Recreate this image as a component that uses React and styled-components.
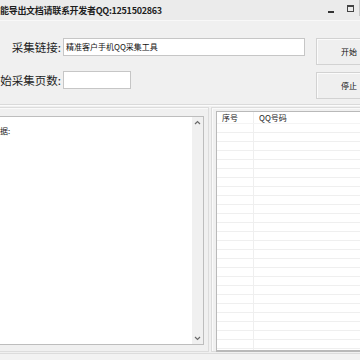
import React from "react";
import styled, { createGlobalStyle } from "styled-components";

const Global = createGlobalStyle`
  html, body { margin: 0; padding: 0; background: #f0f0f0; }
  body { font-family: "Noto Sans CJK SC", "Liberation Sans", sans-serif; }
`;

const Window = styled.div`
  width: 360px;
  height: 360px;
  overflow: hidden;
  background: #f0f0f0;
  display: flex;
  flex-direction: column;
  color: #1e1e1e;
`;

const TitleBar = styled.div`
  flex: none;
  height: 20px;
  display: flex;
  align-items: center;
  background: #ebebeb;
  border-bottom: 1px solid #f8f8f8;
`;

const Title = styled.div`
  flex: 1;
  font-size: 9px;
  font-weight: 700;
  white-space: nowrap;
  letter-spacing: -0.3px;
`;

const Controls = styled.div`
  display: flex;
  align-items: center;
  height: 100%;
`;

const MinBtn = styled.span`
  width: 6px;
  height: 2px;
  background: #333;
  margin: 4px 13px 0 0;
`;

const MaxBtn = styled.span`
  width: 5px;
  height: 4px;
  border: 1px solid #444;
  border-top-width: 2px;
  margin: -4px 5px 0 0;
`;

const EdgeLine = styled.span`
  width: 1px;
  height: 16px;
  align-self: flex-start;
  background: #c8c8c8;
`;

const FormArea = styled.div`
  flex: none;
  display: flex;
  padding: 17px 0 5px 0;
`;

const Fields = styled.div`
  width: 305px;
  display: flex;
  flex-direction: column;
  gap: 15px;
`;

const Row = styled.div`
  display: flex;
  align-items: center;
  height: 18px;
`;

const Label = styled.div`
  width: 61px;
  margin-right: 2px;
  flex: none;
  display: flex;
  justify-content: flex-end;
  white-space: nowrap;
  font-size: 11.5px;
  color: #222;
  line-height: 18px;
`;

const Input = styled.div`
  box-sizing: border-box;
  height: 18px;
  width: ${(p) => p.$w}px;
  background: #fff;
  border: 1px solid #c6c6c6;
  font-size: 8px;
  line-height: 16px;
  padding-left: 2px;
  white-space: nowrap;
  color: #111;
`;

const Buttons = styled.div`
  flex: none;
  margin-left: 11px;
  display: flex;
  flex-direction: column;
  gap: 7px;
`;

const Button = styled.div`
  box-sizing: border-box;
  width: 66px;
  height: 27px;
  border: 1px solid #d2d2d2;
  background: #efefef;
  box-shadow: inset 1px 1px 0 #fbfbfb;
  display: flex;
  align-items: center;
  justify-content: center;
  font-size: 8px;
  color: #111;
`;

const Separator = styled.div`
  flex: none;
  height: 0;
  border-top: 1px solid #dadada;
  border-bottom: 1px solid #fbfbfb;
`;

const Panels = styled.div`
  flex: none;
  height: 245px;
  margin-top: 1px;
  display: flex;
  gap: 2px;
`;

const GroupBox = styled.div`
  box-sizing: border-box;
  flex: none;
  width: ${(p) => p.$w}px;
  margin-left: ${(p) => p.$ml || 0}px;
  border: 1px solid #dcdcdc;
  box-shadow: inset 1px 1px 0 #fafafa;
  padding: ${(p) => p.$pad};
  display: flex;
`;

const TextArea = styled.div`
  box-sizing: border-box;
  flex: 1;
  height: 229px;
  background: #fff;
  border: 1px solid #bdbdbd;
  display: flex;
`;

const LogText = styled.div`
  flex: 1;
  font-size: 8px;
  padding: 8px 0 0 0;
  white-space: nowrap;
  color: #222;
`;

const Scrollbar = styled.div`
  width: 11px;
  background: #f0f0f0;
  display: flex;
  flex-direction: column;
  justify-content: space-between;
  align-items: center;
  padding: 3px 0 3px;
`;

const ListView = styled.div`
  box-sizing: border-box;
  width: 160px;
  height: 241px;
  background: #fff;
  border: 1px solid #b9b9b9;
  border-bottom-width: 2px;
  display: flex;
  flex-direction: column;
  overflow: hidden;
`;

const ListRow = styled.div`
  flex: none;
  display: flex;
  height: ${(p) => (p.$head ? 12 : 9)}px;
  box-sizing: border-box;
  border-bottom: 1px solid ${(p) => (p.$head ? "#f4f4f4" : "#efefef")};
  font-size: 8px;
  line-height: 11px;
  color: #222;
`;

const Cell = styled.div`
  box-sizing: border-box;
  width: ${(p) => p.$w || "auto"};
  flex: ${(p) => (p.$w ? "none" : 1)};
  padding-left: 5px;
  border-right: ${(p) => (p.$w ? "1px solid #efefef" : "none")};
  white-space: nowrap;
`;

const Footer = styled.div`
  flex: 1;
  margin-top: 1px;
  border-top: 1px solid #dcdcdc;
  background: #f2f2f2;
`;

const Chevron = ({ up }) => (
  <svg width="7" height="5" viewBox="0 0 7 5">
    <path
      d={up ? "M1 4 L3.5 1.5 L6 4" : "M1 1 L3.5 3.5 L6 1"}
      fill="none"
      stroke="#6a6a6a"
      strokeWidth="1.2"
    />
  </svg>
);

export default function App() {
  const rows = Array.from({ length: 26 });
  return (
    <Window>
      <Global />
      <TitleBar>
        <Title>能导出文档请联系开发者QQ:1251502863</Title>
        <Controls>
          <MinBtn />
          <MaxBtn />
          <EdgeLine />
        </Controls>
      </TitleBar>

      <FormArea>
        <Fields>
          <Row>
            <Label>采集链接:</Label>
            <Input $w={242}>精准客户手机QQ采集工具</Input>
          </Row>
          <Row>
            <Label>开始采集页数:</Label>
            <Input $w={68} />
          </Row>
        </Fields>
        <Buttons>
          <Button>开始</Button>
          <Button>停止</Button>
        </Buttons>
      </FormArea>

      <Separator />

      <Panels>
        <GroupBox $w={219} $ml={-10} $pad="8px 4px 6px 0">
          <TextArea>
            <LogText>数据:</LogText>
            <Scrollbar>
              <Chevron up />
              <Chevron />
            </Scrollbar>
          </TextArea>
        </GroupBox>
        <GroupBox $w={160} $pad="3px 0 0 4px">
          <ListView>
            <ListRow $head>
              <Cell $w="37px">序号</Cell>
              <Cell>QQ号码</Cell>
            </ListRow>
            {rows.map((_, i) => (
              <ListRow key={i}>
                <Cell $w="37px" />
                <Cell />
              </ListRow>
            ))}
          </ListView>
        </GroupBox>
      </Panels>

      <Footer />
    </Window>
  );
}
